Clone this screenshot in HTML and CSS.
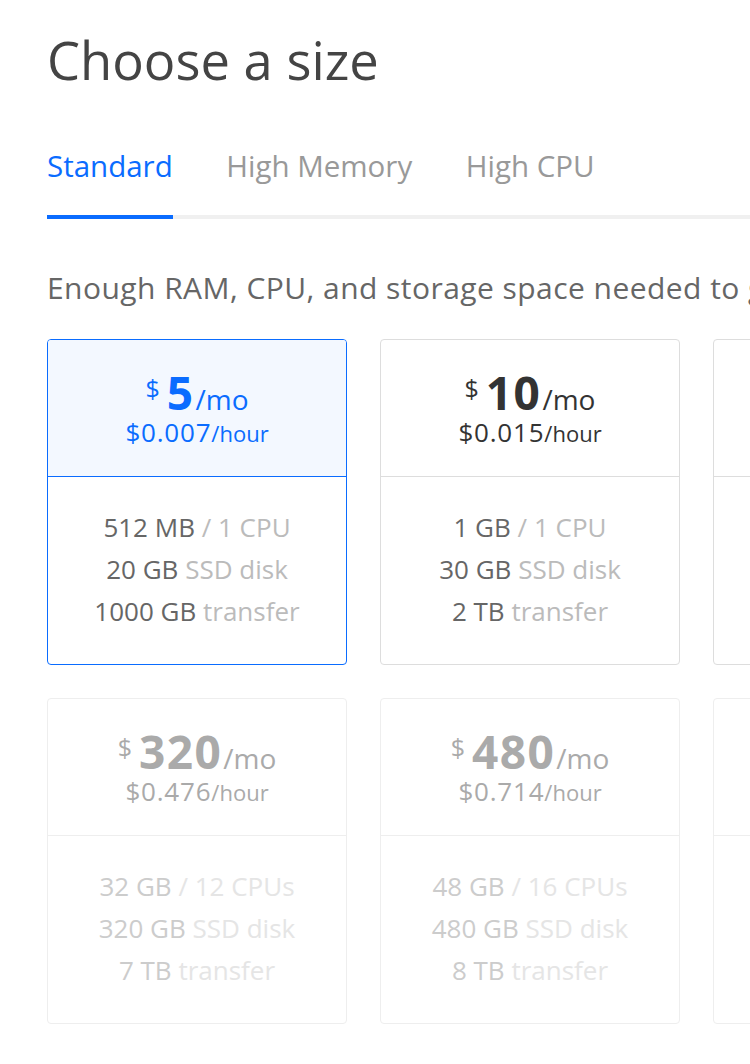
FILE: index.html
```html
<!DOCTYPE html>
<html>
<head>
<meta charset="utf-8">
<link rel="stylesheet" href="styles.css">
</head>
<body>
<div class="page">
  <h1 class="title">Choose a size</h1>
  <div class="tabs">
    <div class="tab active">Standard</div>
    <div class="tab">High Memory</div>
    <div class="tab">High CPU</div>
  </div>
  <p class="desc">Enough RAM, CPU, and storage space needed to get started with your application.</p>
  <div class="grid">
    <div class="card selected">
      <div class="head">
        <div class="price"><span class="cur">$</span><span class="amt">5</span><span class="per">/mo</span></div>
        <div class="hour"><span class="hv">$0.007</span><span class="hu">/hour</span></div>
      </div>
      <div class="specs">
        <div><b>512 MB</b> <span>/ 1 CPU</span></div>
        <div><b>20 GB</b> <span>SSD disk</span></div>
        <div><b>1000 GB</b> <span>transfer</span></div>
      </div>
    </div>
    <div class="card">
      <div class="head">
        <div class="price"><span class="cur">$</span><span class="amt">10</span><span class="per">/mo</span></div>
        <div class="hour"><span class="hv">$0.015</span><span class="hu">/hour</span></div>
      </div>
      <div class="specs">
        <div><b>1 GB</b> <span>/ 1 CPU</span></div>
        <div><b>30 GB</b> <span>SSD disk</span></div>
        <div><b>2 TB</b> <span>transfer</span></div>
      </div>
    </div>
    <div class="card">
      <div class="head">
        <div class="price"><span class="cur">$</span><span class="amt">20</span><span class="per">/mo</span></div>
        <div class="hour"><span class="hv">$0.030</span><span class="hu">/hour</span></div>
      </div>
      <div class="specs">
        <div><b>2 GB</b> <span>/ 2 CPUs</span></div>
        <div><b>40 GB</b> <span>SSD disk</span></div>
        <div><b>3 TB</b> <span>transfer</span></div>
      </div>
    </div>
    <div class="card disabled">
      <div class="head">
        <div class="price"><span class="cur">$</span><span class="amt">320</span><span class="per">/mo</span></div>
        <div class="hour"><span class="hv">$0.476</span><span class="hu">/hour</span></div>
      </div>
      <div class="specs">
        <div><b>32 GB</b> <span>/ 12 CPUs</span></div>
        <div><b>320 GB</b> <span>SSD disk</span></div>
        <div><b>7 TB</b> <span>transfer</span></div>
      </div>
    </div>
    <div class="card disabled">
      <div class="head">
        <div class="price"><span class="cur">$</span><span class="amt">480</span><span class="per">/mo</span></div>
        <div class="hour"><span class="hv">$0.714</span><span class="hu">/hour</span></div>
      </div>
      <div class="specs">
        <div><b>48 GB</b> <span>/ 16 CPUs</span></div>
        <div><b>480 GB</b> <span>SSD disk</span></div>
        <div><b>8 TB</b> <span>transfer</span></div>
      </div>
    </div>
    <div class="card disabled">
      <div class="head">
        <div class="price"><span class="cur">$</span><span class="amt">640</span><span class="per">/mo</span></div>
        <div class="hour"><span class="hv">$0.952</span><span class="hu">/hour</span></div>
      </div>
      <div class="specs">
        <div><b>64 GB</b> <span>/ 20 CPUs</span></div>
        <div><b>640 GB</b> <span>SSD disk</span></div>
        <div><b>9 TB</b> <span>transfer</span></div>
      </div>
    </div>
  </div>
</div>
</body>
</html>
```
FILE: styles.css
```css
html, body {
  margin: 0;
  padding: 0;
  background: #fff;
  overflow: hidden;
}
body {
  font-family: "Open Sans", "Liberation Sans", sans-serif;
  width: 750px;
  height: 1064px;
}
.page {
  padding: 29px 0 0 47px;
  width: 1200px;
}
.title {
  margin: 0;
  font-size: 52.5px;
  font-weight: 400;
  color: #444;
  line-height: 62px;
}
.tabs {
  display: flex;
  margin-top: 56px;
  border-bottom: 4px solid #f0f0f0;
  width: 760px;
}
.tab {
  font-size: 29.5px;
  color: #999;
  line-height: 38px;
  padding-bottom: 30px;
  margin-right: 53.5px;
  margin-bottom: -4px;
  border-bottom: 4px solid transparent;
}
.tab.active {
  color: #0a6cff;
  border-bottom-color: #0a6cff;
}
.desc {
  margin: 49px 0 0;
  font-size: 30px;
  letter-spacing: 0.45px;
  color: #666;
  line-height: 40px;
  white-space: nowrap;
}
.grid {
  display: grid;
  grid-template-columns: repeat(3, 300px);
  gap: 33px;
  margin-top: 31px;
}
.card {
  box-sizing: border-box;
  height: 326px;
  border: 1.5px solid #ddd;
  border-radius: 4px;
  display: flex;
  flex-direction: column;
  text-align: center;
}
.head {
  height: 137px;
  box-sizing: border-box;
  border-bottom: 1.5px solid #ddd;
  padding-top: 29px;
}
.price {
  color: #333;
  font-size: 46px;
  line-height: 46px;
  height: 46px;
  white-space: nowrap;
}
.cur {
  font-size: 25px;
  line-height: 1;
  vertical-align: 12px;
  margin-right: 7px;
}
.amt {
  font-size: 46px;
  font-weight: 700;
  letter-spacing: 1.5px;
  margin-right: 1px;
}
.per {
  font-size: 28px;
  line-height: 1;
}
.hour {
  color: #333;
  font-size: 26px;
  line-height: 34px;
}
.hv { font-size: 26px; letter-spacing: 0.8px; }
.hu { font-size: 22px; }
.specs {
  padding-top: 28.5px;
  font-size: 26px;
  line-height: 42px;
}
.specs b {
  font-weight: 400;
  color: #666;
}
.specs span {
  color: #bbb;
}
.card.selected {
  border-color: #0a6cff;
}
.card.selected .head {
  background: #f3f8ff;
  border-bottom-color: #0a6cff;
  border-radius: 3px 3px 0 0;
}
.card.selected .price,
.card.selected .hour {
  color: #0a6cff;
}
.card.disabled {
  border-color: #eee;
}
.card.disabled .head {
  border-bottom-color: #eee;
}
.card.disabled .price,
.card.disabled .hour {
  color: #aaa;
}
.card.disabled .specs b { color: #ccc; }
.card.disabled .specs span { color: #e5e5e5; }
```
